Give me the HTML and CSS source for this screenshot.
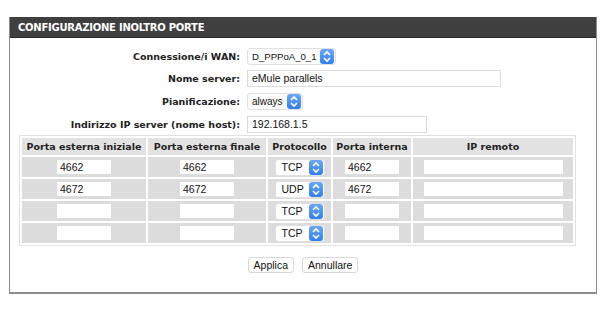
FILE: index.html
```html
<!DOCTYPE html>
<html>
<head>
    <title>Inoltro porte</title>
    <link rel="stylesheet" href="styles.css">
</head>
<body>

<div class="panel">
    <div class="panel-title">CONFIGURAZIONE INOLTRO PORTE</div>

    <div class="form">
        <div class="form-row">
            <label>Connessione/i WAN:</label>
            <div class="select wan">D_PPPoA_0_1<span class="stepper"><svg width="14" height="15" viewBox="0 0 14 15"><path d="M4 6 L7 3 L10 6 M4 9 L7 12 L10 9" fill="none" stroke="#fff" stroke-width="1.6"/></svg></span></div>
        </div>
        <div class="form-row">
            <label>Nome server:</label>
            <div class="input name">eMule parallels</div>
        </div>
        <div class="form-row">
            <label>Pianificazione:</label>
            <div class="select sched">always<span class="stepper"><svg width="14" height="15" viewBox="0 0 14 15"><path d="M4 6 L7 3 L10 6 M4 9 L7 12 L10 9" fill="none" stroke="#fff" stroke-width="1.6"/></svg></span></div>
        </div>
        <div class="form-row">
            <label>Indirizzo IP server (nome host):</label>
            <div class="input ip">192.168.1.5</div>
        </div>
    </div>

    <table class="ports">
        <tr>
            <th class="c1">Porta esterna iniziale</th>
            <th class="c2">Porta esterna finale</th>
            <th class="c3">Protocollo</th>
            <th class="c4">Porta interna</th>
            <th class="c5">IP remoto</th>
        </tr>
        <tr>
            <td><div class="input port">4662</div></td>
            <td><div class="input port">4662</div></td>
            <td><div class="select proto">TCP<span class="stepper"><svg width="14" height="15" viewBox="0 0 14 15"><path d="M4 6 L7 3 L10 6 M4 9 L7 12 L10 9" fill="none" stroke="#fff" stroke-width="1.6"/></svg></span></div></td>
            <td><div class="input port">4662</div></td>
            <td><div class="input remote"></div></td>
        </tr>
        <tr>
            <td><div class="input port">4672</div></td>
            <td><div class="input port">4672</div></td>
            <td><div class="select proto">UDP<span class="stepper"><svg width="14" height="15" viewBox="0 0 14 15"><path d="M4 6 L7 3 L10 6 M4 9 L7 12 L10 9" fill="none" stroke="#fff" stroke-width="1.6"/></svg></span></div></td>
            <td><div class="input port">4672</div></td>
            <td><div class="input remote"></div></td>
        </tr>
        <tr>
            <td><div class="input port"></div></td>
            <td><div class="input port"></div></td>
            <td><div class="select proto">TCP<span class="stepper"><svg width="14" height="15" viewBox="0 0 14 15"><path d="M4 6 L7 3 L10 6 M4 9 L7 12 L10 9" fill="none" stroke="#fff" stroke-width="1.6"/></svg></span></div></td>
            <td><div class="input port"></div></td>
            <td><div class="input remote"></div></td>
        </tr>
        <tr>
            <td><div class="input port"></div></td>
            <td><div class="input port"></div></td>
            <td><div class="select proto">TCP<span class="stepper"><svg width="14" height="15" viewBox="0 0 14 15"><path d="M4 6 L7 3 L10 6 M4 9 L7 12 L10 9" fill="none" stroke="#fff" stroke-width="1.6"/></svg></span></div></td>
            <td><div class="input port"></div></td>
            <td><div class="input remote"></div></td>
        </tr>
    </table>

    <div class="buttons">
        <span class="button">Applica</span>
        <span class="button">Annullare</span>
    </div>
</div>

</body>
</html>
```

FILE: styles.css
```css
body {
    margin: 0;
    background-color: #fff;
    font-family: "DejaVu Sans", Verdana, sans-serif;
    color: #222;
}

.panel {
    margin: 17px 0 0 9px;
    width: 586px;
    height: 275px;
    border: 1px solid #8c8c8c;
    border-bottom: 2px solid #8c8c8c;
    border-top: none;
}

.panel-title {
    background-color: #3f3f40;
    color: #fff;
    font-weight: bold;
    font-size: 10px;
    letter-spacing: -0.25px;
    height: 20px;
    line-height: 21px;
    padding-left: 8px;
    border-bottom: 1px solid #2a2a2a;
}

.form {
    padding-top: 7px;
}

.form-row {
    display: flex;
    align-items: center;
    height: 22.6px;
}

.form-row label {
    width: 230px;
    text-align: right;
    font-weight: bold;
    font-size: 9.5px;
    margin-right: 7px;
}

.input {
    box-sizing: border-box;
    background: #fff;
    border: 1px solid #dcdcdc;
    height: 17px;
    line-height: 15px;
    padding-left: 4px;
    font-family: "Liberation Sans", Arial, sans-serif;
    font-size: 10.5px;
    color: #111;
}

.input.name {
    width: 254px;
}

.input.ip {
    width: 180px;
}

.select {
    box-sizing: border-box;
    display: flex;
    align-items: center;
    justify-content: space-between;
    background: #fff;
    border: 1px solid #e0e0e0;
    border-radius: 3px;
    height: 17px;
    padding-left: 4px;
    padding-right: 1px;
    font-family: "Liberation Sans", Arial, sans-serif;
    font-size: 10px;
    color: #111;
}

.select.wan {
    width: 89px;
    font-size: 9.6px;
}

.select.sched {
    width: 56px;
}

.stepper {
    display: flex;
    width: 14px;
    height: 15px;
    border-radius: 3px;
    background: linear-gradient(#6aa8f4, #2f7ff0);
}

.ports {
    margin: 0 0 0 9px;
    width: 557px;
    border-collapse: separate;
    border-spacing: 2px;
    border: 1px solid #e2e2e2;
}

.ports th {
    background-color: #e2e2e2;
    font-weight: bold;
    font-size: 9.5px;
    height: 17px;
    padding: 0;
}

.ports td {
    background-color: #dcdcdc;
    height: 20px;
    padding: 0;
}

.ports td .input,
.ports td .select {
    margin: 0 auto;
}

.c1 { width: 124px; }
.c2 { width: 118px; }
.c3 { width: 63px; }
.c4 { width: 78px; }

.input.port {
    width: 56px;
    height: 16px;
    padding-left: 3px;
}

.select.proto {
    width: 50px;
    padding-left: 6px;
    font-size: 10.5px;
}

.input.remote {
    width: 141px;
    height: 16px;
}

.buttons {
    display: flex;
    justify-content: center;
    gap: 8px;
    margin-top: 11px;
}

.button {
    font-family: "Liberation Sans", Arial, sans-serif;
    font-size: 10.5px;
    color: #111;
    background: #fff;
    border: 1px solid #d8d8d8;
    border-radius: 3px;
    height: 14px;
    line-height: 14px;
    padding: 0 5px;
}
```
